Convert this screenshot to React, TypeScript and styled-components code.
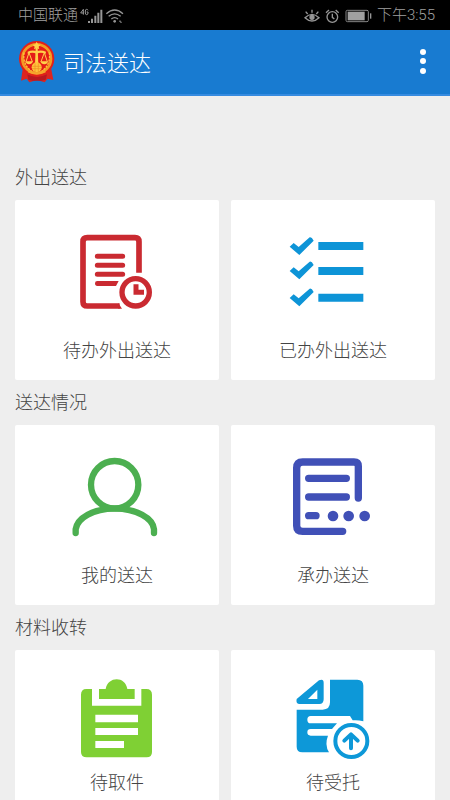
import React from "react";
import styled, { createGlobalStyle } from "styled-components";

const GlobalStyle = createGlobalStyle`
  * { box-sizing: border-box; }
  body {
    margin: 0;
    background: #eeeeee;
    font-family: Roboto, "Noto Sans CJK SC", sans-serif;
  }
  button { font: inherit; }
`;

const Screen = styled.div`
  display: flex;
  flex-direction: column;
  height: 100vh;
  overflow: hidden;
`;

const StatusBar = styled.div`
  display: flex;
  flex: none;
  align-items: center;
  justify-content: space-between;
  height: 30px;
  padding: 1px 15px 0 18px;
  background: #000;
  color: #a0a0a0;
  font-size: 15px;
  font-weight: 300;
  line-height: 29px;
`;

const StatusGroup = styled.div<{ $gap: number }>`
  display: flex;
  align-items: center;
  gap: ${(p) => p.$gap}px;
`;

const AppBar = styled.header`
  display: flex;
  flex: none;
  align-items: center;
  height: 66px;
  padding: 0 12px 0 18px;
  background: #187bd1;
  border-bottom: 2px solid #368be0;
  color: #fff;
`;

const AppTitle = styled.h1`
  flex: 1;
  margin: 0;
  padding: 3px 0 0 7px;
  font-size: 22px;
  font-weight: 300;
  line-height: 32px;
`;

const MenuButton = styled.button`
  display: flex;
  padding: 0;
  border: 0;
  background: none;
  color: #fff;
`;

const Content = styled.main`
  flex: 1;
  min-height: 0;
  padding: 59px 15px 0;
  overflow-y: auto;
  scrollbar-width: none;
`;

const SectionTitle = styled.h2`
  margin: 0;
  color: #444;
  font-size: 18px;
  font-weight: 300;
  line-height: 45px;
`;

const CardGrid = styled.div`
  display: grid;
  grid-template-columns: 1fr 1fr;
  gap: 12px;
`;

const Card = styled.button<{ $compact?: boolean }>`
  display: flex;
  flex-direction: column;
  align-items: center;
  gap: ${(p) => (p.$compact ? 0 : 16)}px;
  padding: ${(p) => (p.$compact ? "18px 0 14px" : "20px 0 14px")};
  border: 0;
  border-radius: 2px;
  background: #fff;
`;

const CardLabel = styled.span`
  color: #444;
  font-size: 18px;
  font-weight: 300;
  line-height: 30px;
`;

const Emblem = () => (
  <svg width="38" height="44" viewBox="0 0 114 132" aria-hidden="true">
    <path d="M14 88 L100 88 L106 120 L89 116 L80 127 L57 120 L34 127 L26 116 L9 122 Z" fill="#dc2520" />
    <path d="M28 103 Q57 119 87 103 L83 119 Q57 126 31 119 Z" fill="#b91920" />
    <circle cx="56" cy="56" r="53" fill="#e32019" />
    <circle cx="56" cy="56" r="43" fill="none" stroke="#f39b24" strokeWidth="8" />
    <circle cx="56" cy="56" r="38" fill="#e51c17" />
    <path d="M18 38 Q13 74 41 94 M94 38 Q99 74 71 94" fill="none" stroke="#ffc03a" strokeWidth="4" strokeDasharray="7 3" />
    <g fill="#ffd04a">
      <path d="M56 5 L60 13 L68 14 L62 20 L64 28 L56 24 L48 28 L50 20 L44 14 L52 13 Z" />
      <path d="M53 20 H59 L61 75 H51 Z" />
      <path d="M29 35 Q44 28 56 34 Q68 28 84 35 L83 41 Q68 36 56 41 Q43 36 29 41 Z" />
      <path d="M22 64 H45 Q42 73 33 73 Q25 73 22 64 Z M67 64 H90 Q88 73 79 73 Q70 73 67 64 Z" />
    </g>
    <path d="M33 38 L24 65 M33 38 L43 65 M79 38 L69 65 M79 38 L88 65" stroke="#ffd04a" strokeWidth="3" />
    <circle cx="56" cy="82" r="15" fill="#ffc33b" />
    <path d="M43 79 H69 M42 86 H70 M51 70 V97 M61 70 V97" stroke="#ee8d22" strokeWidth="2" />
    <path d="M31 94 Q56 108 82 94" fill="none" stroke="#f6a52d" strokeWidth="7" />
  </svg>
);

const MoreIcon = () => (
  <svg width="30" height="32" viewBox="0 0 30 32" fill="currentColor" aria-hidden="true">
    <circle cx="15" cy="6" r="3" />
    <circle cx="15" cy="15" r="3" />
    <circle cx="15" cy="25" r="3" />
  </svg>
);

const SignalIcons = () => (
  <svg width="44" height="18" viewBox="0 -5 132 54" aria-hidden="true">
    <g fill="none" stroke="#969696" strokeWidth="3">
      <path d="M10 18 V2 L2 13 H12" />
      <path d="M24 5 Q23 2 20 2 Q16 2 16 7 V13 Q16 18 20 18 Q24 18 24 13 V10 H20" />
    </g>
    <g fill="#969696">
      <path d="M24 37 h6 v6 h-6 Z M33 30 h6 v13 h-6 Z M43 21 h6 v22 h-6 Z M52 12 h6 v31 h-6 Z M61 3 h6 v40 h-6 Z" />
      <circle cx="104" cy="38" r="4" />
    </g>
    <g fill="none" stroke="#969696" strokeWidth="4">
      <path d="M79 15 Q104 -7 129 15" />
      <path d="M86 23 Q104 8 122 23" />
      <path d="M94 31 Q104 23 114 31" />
    </g>
    <path d="M117 39 l3 -5 l3 5 Z M120 42 l3 -4 l3 4 Z" fill="#969696" />
  </svg>
);

const EyeIcon = () => (
  <svg width="16" height="16" viewBox="0 0 48 48" fill="none" stroke="#969696" strokeWidth="4" aria-hidden="true">
    <path d="M3 29 Q24 9 45 29 Q24 49 3 29 Z" />
    <circle cx="24" cy="28" r="6" fill="#969696" />
    <path d="M24 14 V5 M11 18 L5 11 M37 18 L43 11" />
  </svg>
);

const AlarmIcon = () => (
  <svg width="15" height="16" viewBox="0 0 45 48" fill="none" stroke="#969696" strokeWidth="4" aria-hidden="true">
    <circle cx="22" cy="27" r="16" />
    <path d="M22 17 V28 L28 33 M3 14 L12 6 M32 6 L41 14" />
  </svg>
);

const BatteryIcon = () => (
  <svg width="27" height="14" viewBox="0 0 81 42" aria-hidden="true">
    <rect x="3" y="4" width="67" height="34" rx="4" fill="none" stroke="#858585" strokeWidth="3" />
    <rect x="8" y="8" width="51" height="26" fill="#a0a0a0" />
    <rect x="75" y="13" width="4" height="16" fill="#969696" />
  </svg>
);

const PendingIcon = () => (
  <svg width="110" height="100" viewBox="6 -15 330 300" aria-hidden="true">
    <g fill="none" stroke="#ca2a31">
      <path d="M237 143 V50 Q237 38 225 38 H82 Q69 38 69 50 V230 Q69 243 82 243 H179" strokeWidth="17" />
      <path d="M112 94 H188 M112 121 H188 M112 148 H188" strokeWidth="15" strokeLinecap="round" />
      <circle cx="227" cy="202" r="41" strokeWidth="16" />
      <path d="M228 178 V202 H252" strokeWidth="15" />
    </g>
    <path d="M112 168 H176 L168 183 H112 Q105 183 105 175 Q105 168 112 168 Z M175 234 L186 251 H175 Z" fill="#ca2a31" />
  </svg>
);

const ChecklistIcon = () => (
  <svg width="110" height="100" viewBox="9 -15 330 300" aria-hidden="true">
    <g fill="#0d94d7">
      <path d="M130 51 H265 V75 H130 Z M130 126 H265 V150 H130 Z M130 206 H265 V230 H130 Z" />
      <path d="M44 65 L56 54 L71 66 L104 37 Q110 35 116 47 L73 90 Z" />
      <path d="M44 138 L56 127 L71 139 L104 110 Q110 108 116 120 L73 163 Z" />
      <path d="M44 219 L56 208 L71 220 L104 191 Q110 189 116 201 L73 244 Z" />
    </g>
  </svg>
);

const PersonIcon = () => (
  <svg width="110" height="100" viewBox="6 0 330 300" fill="none" stroke="#4caf50" strokeWidth="19" aria-hidden="true">
    <circle cx="164" cy="119" r="71" />
    <path d="M47 264 V253 C52 219 99 191 164 191 C229 191 279 219 282 253 V264" strokeLinecap="round" />
  </svg>
);

const HandlingIcon = () => (
  <svg width="110" height="100" viewBox="9 0 330 300" aria-hidden="true">
    <g fill="none" stroke="#4050b7" strokeLinecap="round" strokeLinejoin="round">
      <path d="M250 159 V64 Q250 51 237 51 H83 Q65 51 65 69 V242 Q65 259 83 259 H203" strokeWidth="22" />
      <path d="M101 100 H214 M101 156 H214 M101 212 H123" strokeWidth="22" />
    </g>
    <g fill="#4050b7">
      <circle cx="174" cy="213" r="16" />
      <circle cx="221" cy="213" r="16" />
      <circle cx="269" cy="213" r="16" />
    </g>
  </svg>
);

const ClipboardIcon = () => (
  <svg width="110" height="100" viewBox="6 -6 330 300" fill="#7fd034" aria-hidden="true">
    <path fillRule="evenodd" d="M79 57 H96 V107 H244 V57 H259 Q276 57 276 74 V246 Q276 262 260 262 H80 Q63 262 63 246 V74 Q63 57 79 57 Z M106 134 V157 H234 V134 Z M106 174 V195 H234 V174 Z M106 213 V234 H192 V213 Z" />
    <path d="M117 57 H137 C143 19 196 17 202 57 H224 V87 H117 Z" />
  </svg>
);

const ReceiveIcon = () => (
  <svg width="110" height="100" viewBox="9 -6 330 300" aria-hidden="true">
    <path d="M165 29 H247 Q265 29 265 47 V154 Q248 149 233 151 L225 138 H107 Q97 138 97 149 Q97 160 107 160 H186 L171 177 H107 Q97 177 97 187 Q97 197 107 197 H159 Q148 224 162 247 H82 Q65 247 65 230 V119 H143 Q165 119 165 97 Z" fill="#0d98d8" />
    <path fillRule="evenodd" d="M65 87 L132 31 Q146 25 146 38 V88 Q146 102 133 102 H72 Q62 101 65 87 Z M99 87 H127 V59 Z" fill="#0d98d8" />
    <circle cx="229" cy="213" r="48" fill="none" stroke="#0d98d8" strokeWidth="12" />
    <path d="M228 235 V196 M208 212 L228 193 L248 212" fill="none" stroke="#0d98d8" strokeWidth="12" strokeLinecap="round" strokeLinejoin="round" />
  </svg>
);

const sections = [
  {
    title: "外出送达",
    cards: [
      { label: "待办外出送达", Icon: PendingIcon },
      { label: "已办外出送达", Icon: ChecklistIcon },
    ],
  },
  {
    title: "送达情况",
    cards: [
      { label: "我的送达", Icon: PersonIcon },
      { label: "承办送达", Icon: HandlingIcon },
    ],
  },
  {
    title: "材料收转",
    compact: true,
    cards: [
      { label: "待取件", Icon: ClipboardIcon },
      { label: "待受托", Icon: ReceiveIcon },
    ],
  },
];

export default function App() {
  return (
    <Screen>
      <GlobalStyle />
      <StatusBar>
        <StatusGroup $gap={2}>
          <span>中国联通</span>
          <SignalIcons />
        </StatusGroup>
        <StatusGroup $gap={5}>
          <EyeIcon />
          <AlarmIcon />
          <BatteryIcon />
          <span>下午3:55</span>
        </StatusGroup>
      </StatusBar>
      <AppBar>
        <Emblem />
        <AppTitle>司法送达</AppTitle>
        <MenuButton type="button" aria-label="更多">
          <MoreIcon />
        </MenuButton>
      </AppBar>
      <Content>
        {sections.map(({ title, cards, compact }) => (
          <section key={title}>
            <SectionTitle>{title}</SectionTitle>
            <CardGrid>
              {cards.map(({ label, Icon }) => (
                <Card key={label} type="button" $compact={compact}>
                  <Icon />
                  <CardLabel>{label}</CardLabel>
                </Card>
              ))}
            </CardGrid>
          </section>
        ))}
      </Content>
    </Screen>
  );
}
